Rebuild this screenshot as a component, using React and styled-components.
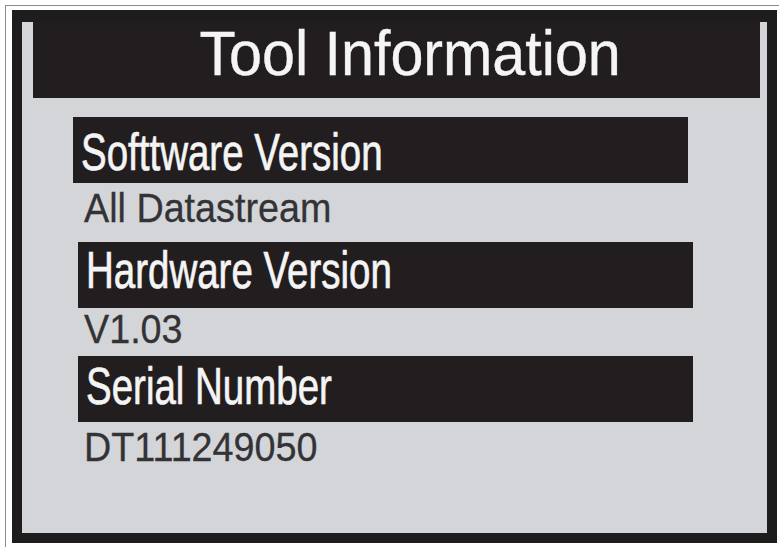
import React from "react";
import styled, { createGlobalStyle } from "styled-components";

const GlobalStyle = createGlobalStyle`
  html, body {
    margin: 0;
    padding: 0;
    background: #ffffff;
  }
  * {
    box-sizing: border-box;
  }
`;

const Page = styled.div`
  width: 781px;
  height: 549px;
  padding: 5px 0 0 5px;
  background: #ffffff;
  font-family: "Liberation Sans", Arial, sans-serif;
`;

const Outline = styled.div`
  width: 774px;
  height: 542px;
  border-top: 1px solid #8c8c8c;
  border-left: 1px solid #8c8c8c;
  padding: 4px 0 0 6px;
`;

const Frame = styled.div`
  width: 765px;
  height: 533px;
  background: #d3d5d8;
  border: 10px solid #1f1c1d;
  border-top-width: 12px;
  display: flex;
  flex-direction: column;
`;

const TitleBar = styled.div`
  height: 76px;
  margin: 0 7px 0 11px;
  background: #221e1f;
  color: #f5f5f5;
  text-align: center;
  padding-left: 28px;
  font-size: 63px;
  line-height: 63px;
  -webkit-text-stroke: 0.4px #f5f5f5;
`;

const Squeeze = styled.span`
  display: inline-block;
  white-space: nowrap;
  transform: scaleX(${(p) => p.$x});
  transform-origin: ${(p) => (p.$center ? "center" : "left")} center;
`;

const List = styled.div`
  display: flex;
  flex-direction: column;
  padding: 19px 0 0 53px;
`;

const LabelBar = styled.div`
  width: 615px;
  height: 66px;
  margin-left: ${(p) => p.$shift || 0}px;
  padding: ${(p) => p.$top}px 0 0 8px;
  background: #221e1f;
  color: #f4f4f4;
  font-size: 52px;
  line-height: 56px;
  -webkit-text-stroke: 0.7px #f4f4f4;
`;

const Value = styled.div`
  height: ${(p) => p.$h}px;
  padding-left: 9px;
  color: #333336;
  font-size: 41px;
  line-height: ${(p) => p.$lh}px;
  -webkit-text-stroke: 0.3px #333336;
`;

const rows = [
  { label: "Softtware Version", value: "All Datastream", top: 7, h: 59, lh: 50, shift: -2 },
  { label: "Hardware Version", value: "V1.03", top: 0, h: 48, lh: 42, shift: 3 },
  { label: "Serial Number", value: "DT111249050", top: 2, h: 50, lh: 50, shift: 3 },
];

export default function App() {
  return (
    <>
      <GlobalStyle />
      <Page>
        <Outline>
          <Frame>
            <TitleBar>
              <Squeeze $x={0.94} $center>
                Tool Information
              </Squeeze>
            </TitleBar>
            <List>
              {rows.map((r) => (
                <React.Fragment key={r.label}>
                  <LabelBar $top={r.top} $shift={r.shift}>
                    <Squeeze $x={0.74}>{r.label}</Squeeze>
                  </LabelBar>
                  <Value $h={r.h} $lh={r.lh}>
                    <Squeeze $x={0.92}>{r.value}</Squeeze>
                  </Value>
                </React.Fragment>
              ))}
            </List>
          </Frame>
        </Outline>
      </Page>
    </>
  );
}
